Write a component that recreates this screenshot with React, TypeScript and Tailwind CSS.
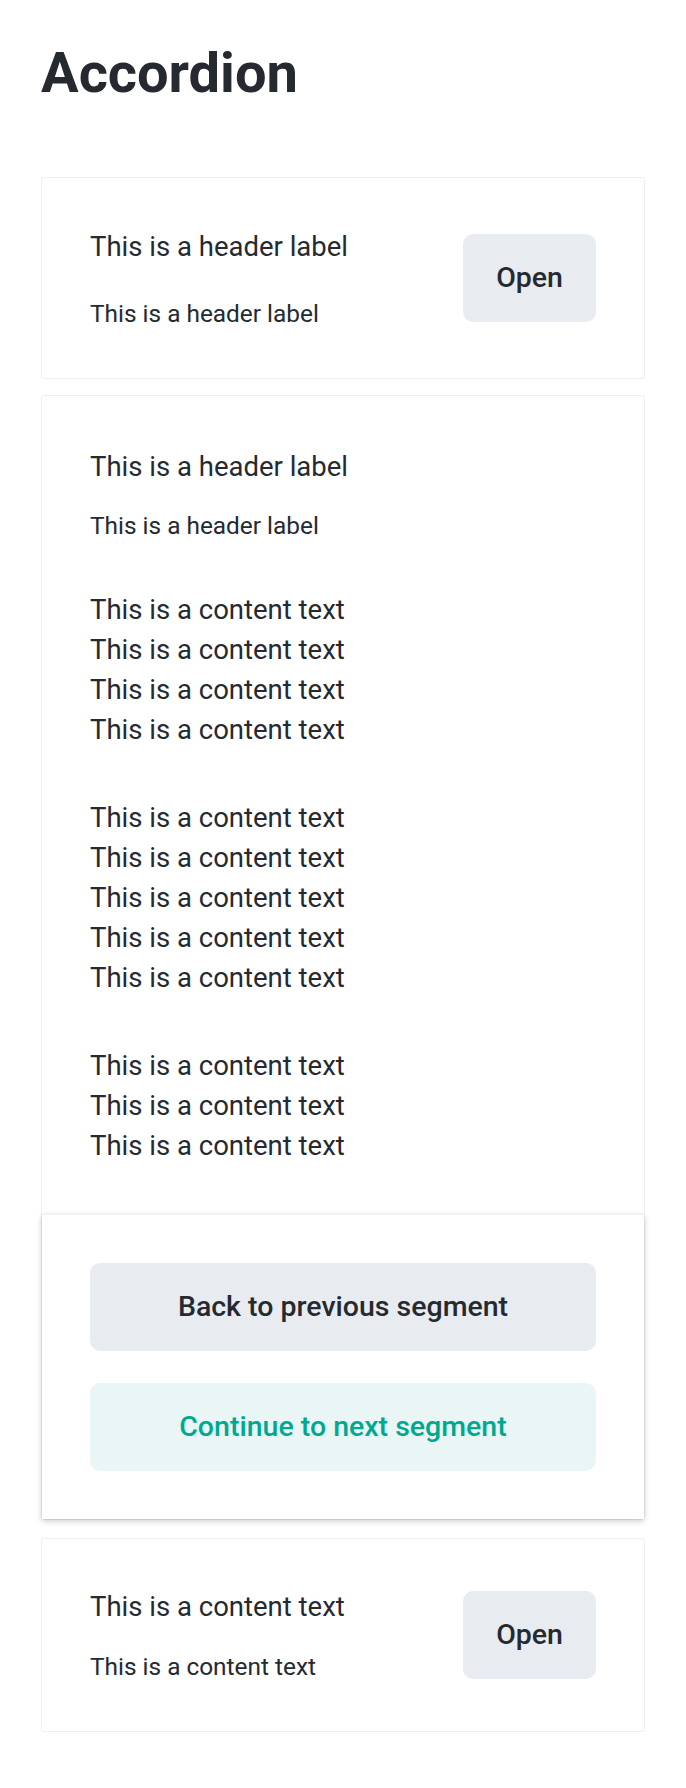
import React from "react";

const font = { fontFamily: "Roboto, 'Noto Sans', sans-serif" };

const paragraphs = [4, 5, 3];

function OpenButton() {
  return (
    <button className="h-[88px] px-[33px] rounded-[10px] bg-[#e8ecf0] text-[28.5px] font-medium text-[#252a31] shrink-0">
      Open
    </button>
  );
}

function CollapsedItem({
  title,
  subtitle,
  gap,
  lead,
}: {
  title: string;
  subtitle: string;
  gap: string;
  lead: string;
}) {
  return (
    <div className="border border-[#edf0f3] rounded-[3px] bg-white px-12 py-12 flex items-center justify-between">
      <div className={`flex flex-col ${gap}`}>
        <div className={`text-[27.5px] ${lead} text-[#252a31]`}>{title}</div>
        <div className="text-[24.4px] leading-[32px] text-[#252a31]">{subtitle}</div>
      </div>
      <OpenButton />
    </div>
  );
}

export default function App() {
  return (
    <main className="min-h-screen bg-white px-[41px] pt-10 pb-14" style={font}>
      <h1 className="text-[56px] leading-[1.2] font-bold text-[#252a31] mb-[70px]">Accordion</h1>

      <CollapsedItem
        title="This is a header label"
        subtitle="This is a header label"
        gap="gap-[30px]"
        lead="leading-[42px]"
      />

      {/* open item */}
      <div className="mt-4 border border-[#edf0f3] rounded-[3px] bg-white">
        <div className="px-12 pt-12 pb-12">
          <div className="flex flex-col gap-5">
            <div className="text-[27.5px] leading-[46px] text-[#252a31]">This is a header label</div>
            <div className="text-[24.4px] leading-[32px] text-[#252a31]">This is a header label</div>
          </div>
          <div className="mt-12 flex flex-col gap-12">
            {paragraphs.map((n, i) => (
              <p key={i} className="text-[27.5px] leading-[40px] text-[#252a31]">
                {Array.from({ length: n }).map((_, j) => (
                  <span key={j} className="block">This is a content text</span>
                ))}
              </p>
            ))}
          </div>
        </div>
        <div className="bg-white border-t border-[#eef0f2] shadow-[0_2px_6px_rgba(0,0,0,0.22)] px-12 py-12 flex flex-col gap-8">
          <button className="h-[88px] w-full rounded-[10px] bg-[#e8ecf0] text-[28.5px] font-medium text-[#252a31]">
            Back to previous segment
          </button>
          <button className="h-[88px] w-full rounded-[10px] bg-[#eaf6f6] text-[28.5px] font-medium text-[#00a88e]">
            Continue to next segment
          </button>
        </div>
      </div>

      <div className="mt-[18px]">
        <CollapsedItem
          title="This is a content text"
          subtitle="This is a content text"
          gap="gap-6"
          lead="leading-[40px]"
        />
      </div>
    </main>
  );
}
